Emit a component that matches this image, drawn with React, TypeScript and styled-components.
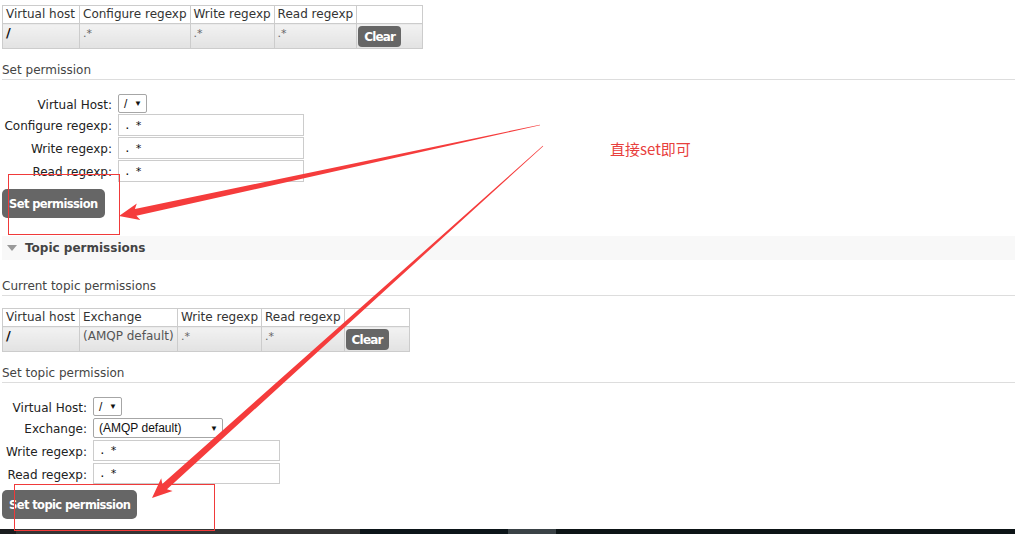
import styled, { createGlobalStyle } from 'styled-components';

const GlobalStyle = createGlobalStyle`
  html, body {
    margin: 0;
    padding: 0;
    background: #fff;
  }
  body {
    font-family: "DejaVu Sans", Verdana, sans-serif;
    font-size: 12px;
    color: #222;
  }
`;

const Page = styled.div`
  position: relative;
  display: flex;
  flex-direction: column;
  align-items: stretch;
  height: 100vh;
  padding-left: 2px;
  box-sizing: border-box;
  overflow: hidden;
`;

const Table = styled.table<{ $top: number }>`
  align-self: flex-start;
  border-collapse: collapse;
  table-layout: fixed;
  margin-top: ${({ $top }) => $top}px;
  font-size: 12px;

  th,
  td {
    border: 1px solid #ccc;
    padding: 0 3px;
    text-align: left;
    vertical-align: top;
    white-space: nowrap;
    font-weight: normal;
    box-sizing: border-box;
  }
  th {
    height: 18px;
    line-height: 17px;
    color: #333;
    background: #fff;
  }
  td {
    height: 25px;
    line-height: 16px;
    padding-top: 1px;
    color: #555;
    background: linear-gradient(#f2f2f2, #e2e2e2);
  }
`;

const Cell = styled.td<{ $w: number }>`
  width: ${({ $w }) => $w}px;
`;

const HeadCell = styled.th<{ $w: number }>`
  width: ${({ $w }) => $w}px;
`;

const Vhost = styled.span`
  font-weight: bold;
  color: #111;
  font-size: 13px;
`;

const Regexp = styled.span`
  color: #666;
  font-size: 11px;
`;

const Subhead = styled.div<{ $top: number }>`
  margin-top: ${({ $top }) => $top}px;
  padding-top: 1px;
  line-height: 17px;
  font-size: 12px;
  color: #444;
  border-bottom: 1px solid #ddd;
`;

const Form = styled.div<{ $label: number; $gap: number }>`
  margin-top: 14px;
  display: grid;
  grid-template-columns: ${({ $label }) => $label}px auto;
  column-gap: 6px;
  row-gap: ${({ $gap }) => $gap}px;
  align-items: center;
  justify-items: start;
`;

const Label = styled.label`
  justify-self: end;
  font-size: 12px;
  line-height: 16px;
  padding-top: 2px;
  color: #222;
`;

const FakeSelect = styled.div<{ $w: number; $h: number }>`
  display: flex;
  align-items: center;
  justify-content: space-between;
  width: ${({ $w }) => $w}px;
  height: ${({ $h }) => $h}px;
  box-sizing: border-box;
  border: 1px solid #a6a6a6;
  border-radius: 2px;
  padding: 0 4px 0 5px;
  font-family: "Liberation Sans", Arial, sans-serif;
  font-size: 12px;
  color: #111;
  background: #fff;

  span:last-child {
    font-size: 8px;
  }
`;

const TextInput = styled.div<{ $w: number; $h: number }>`
  width: ${({ $w }) => $w}px;
  height: ${({ $h }) => $h}px;
  box-sizing: border-box;
  border: 1px solid #ccc;
  padding: 0 5px;
  line-height: ${({ $h }) => $h - 1}px;
  font-family: "DejaVu Sans Mono", monospace;
  font-size: 11px;
  color: #111;
  letter-spacing: -1px;
`;

const Button = styled.button<{ $top: number }>`
  align-self: flex-start;
  margin-top: ${({ $top }) => $top}px;
  height: 29px;
  padding: 0 7px;
  border: none;
  border-radius: 5px;
  background: #666;
  color: #fff;
  font-family: "DejaVu Sans", Verdana, sans-serif;
  font-weight: bold;
  font-size: 11.5px;
  letter-spacing: -0.6px;
`;

const SmallButton = styled.button`
  height: 21px;
  margin-top: 1px;
  margin-left: -2px;
  padding: 0 6px;
  border: none;
  border-radius: 4px;
  background: #666;
  color: #fff;
  font-family: "DejaVu Sans", Verdana, sans-serif;
  font-weight: bold;
  font-size: 12px;
  letter-spacing: -0.8px;
`;

const SectionBar = styled.div`
  margin-top: 18px;
  height: 24px;
  display: flex;
  align-items: center;
  gap: 8px;
  padding-left: 5px;
  background: #f8f8f8;
  font-weight: bold;
  font-size: 12px;
  color: #444;
`;

const Caret = styled.span`
  width: 0;
  height: 0;
  border-left: 5px solid transparent;
  border-right: 5px solid transparent;
  border-top: 6px solid #999;
`;

const Taskbar = styled.div`
  margin-top: auto;
  margin-left: -2px;
  height: 5px;
  display: flex;
`;

const TaskSeg = styled.div<{ $w: number; $c: string }>`
  width: ${({ $w }) => $w}px;
  flex-shrink: 0;
  background: ${({ $c }) => $c};
`;

const Overlay = styled.svg`
  position: absolute;
  left: 0;
  top: 0;
  pointer-events: none;
`;

const Note = styled.div`
  position: absolute;
  left: 610px;
  top: 140px;
  font-family: "Noto Sans CJK SC", sans-serif;
  font-size: 15px;
  line-height: 18px;
  color: #e8403d;
`;

type Pt = [number, number];

function arrowPoints(tail: Pt, tip: Pt, headLen: number, headW: number, shaftW: number) {
  const dx = tip[0] - tail[0];
  const dy = tip[1] - tail[1];
  const len = Math.hypot(dx, dy);
  const ux = dx / len;
  const uy = dy / len;
  const nx = -uy;
  const ny = ux;
  const bx = tip[0] - ux * headLen;
  const by = tip[1] - uy * headLen;
  const pts: Pt[] = [
    [tail[0] + nx * 0.3, tail[1] + ny * 0.3],
    [bx + (nx * shaftW) / 2, by + (ny * shaftW) / 2],
    [bx + (nx * headW) / 2 - ux * 3, by + (ny * headW) / 2 - uy * 3],
    tip,
    [bx - (nx * headW) / 2 - ux * 3, by - (ny * headW) / 2 - uy * 3],
    [bx - (nx * shaftW) / 2, by - (ny * shaftW) / 2],
    [tail[0] - nx * 0.3, tail[1] - ny * 0.3],
  ];
  return pts.map((p) => `${p[0].toFixed(1)},${p[1].toFixed(1)}`).join(' ');
}

const Arrow = ({ tail, tip }: { tail: Pt; tip: Pt }) => (
  <polygon points={arrowPoints(tail, tip, 17, 17, 7)} fill="#f53c3c" />
);

export default function App() {
  return (
    <>
      <GlobalStyle />
      <Page>
        <Table $top={5}>
          <thead>
            <tr>
              <HeadCell $w={77}>Virtual host</HeadCell>
              <HeadCell $w={109}>Configure regexp</HeadCell>
              <HeadCell $w={84}>Write regexp</HeadCell>
              <HeadCell $w={81}>Read regexp</HeadCell>
              <HeadCell $w={66}></HeadCell>
            </tr>
          </thead>
          <tbody>
            <tr>
              <Cell $w={77}>
                <Vhost>/</Vhost>
              </Cell>
              <Cell $w={109}>
                <Regexp>.*</Regexp>
              </Cell>
              <Cell $w={84}>
                <Regexp>.*</Regexp>
              </Cell>
              <Cell $w={81}>
                <Regexp>.*</Regexp>
              </Cell>
              <Cell $w={66}>
                <SmallButton>Clear</SmallButton>
              </Cell>
            </tr>
          </tbody>
        </Table>

        <Subhead $top={12}>Set permission</Subhead>
        <Form $label={110} $gap={1}>
          <Label>Virtual Host:</Label>
          <FakeSelect $w={29} $h={19}>
            <span>/</span>
            <span>▼</span>
          </FakeSelect>
          <Label>Configure regexp:</Label>
          <TextInput $w={186} $h={22}>. *</TextInput>
          <Label>Write regexp:</Label>
          <TextInput $w={186} $h={22}>. *</TextInput>
          <Label>Read regexp:</Label>
          <TextInput $w={186} $h={22}>. *</TextInput>
        </Form>
        <Button $top={7}>Set permission</Button>

        <SectionBar>
          <Caret />
          Topic permissions
        </SectionBar>

        <Subhead $top={17}>Current topic permissions</Subhead>
        <Table $top={12}>
          <thead>
            <tr>
              <HeadCell $w={77}>Virtual host</HeadCell>
              <HeadCell $w={98}>Exchange</HeadCell>
              <HeadCell $w={83}>Write regexp</HeadCell>
              <HeadCell $w={81}>Read regexp</HeadCell>
              <HeadCell $w={65}></HeadCell>
            </tr>
          </thead>
          <tbody>
            <tr>
              <Cell $w={77}>
                <Vhost>/</Vhost>
              </Cell>
              <Cell $w={98}>(AMQP default)</Cell>
              <Cell $w={83}>
                <Regexp>.*</Regexp>
              </Cell>
              <Cell $w={81}>
                <Regexp>.*</Regexp>
              </Cell>
              <Cell $w={65}>
                <SmallButton>Clear</SmallButton>
              </Cell>
            </tr>
          </tbody>
        </Table>

        <Subhead $top={12}>Set topic permission</Subhead>
        <Form $label={85} $gap={2}>
          <Label>Virtual Host:</Label>
          <FakeSelect $w={29} $h={19}>
            <span>/</span>
            <span>▼</span>
          </FakeSelect>
          <Label>Exchange:</Label>
          <FakeSelect $w={130} $h={20}>
            <span>(AMQP default)</span>
            <span>▼</span>
          </FakeSelect>
          <Label>Write regexp:</Label>
          <TextInput $w={187} $h={21}>. *</TextInput>
          <Label>Read regexp:</Label>
          <TextInput $w={187} $h={21}>. *</TextInput>
        </Form>
        <Button $top={6}>Set topic permission</Button>

        <Taskbar>
          <TaskSeg $w={16} $c="#1b1d1f" />
          <TaskSeg $w={344} $c="#343434" />
          <TaskSeg $w={148} $c="#0c1519" />
          <TaskSeg $w={48} $c="#3a4246" />
          <TaskSeg $w={459} $c="#0d1416" />
        </Taskbar>

        <Overlay width={1015} height={534} viewBox="0 0 1015 534">
          <rect x={8.5} y={174.5} width={111} height={60} fill="none" stroke="#f03a3a" strokeWidth={1} />
          <rect x={14.5} y={484.5} width={200} height={46} fill="none" stroke="#f03a3a" strokeWidth={1} />
          <Arrow tail={[540, 125]} tip={[119, 216]} />
          <Arrow tail={[543, 146]} tip={[152, 498]} />
        </Overlay>
        <Note>直接set即可</Note>
      </Page>
    </>
  );
}
